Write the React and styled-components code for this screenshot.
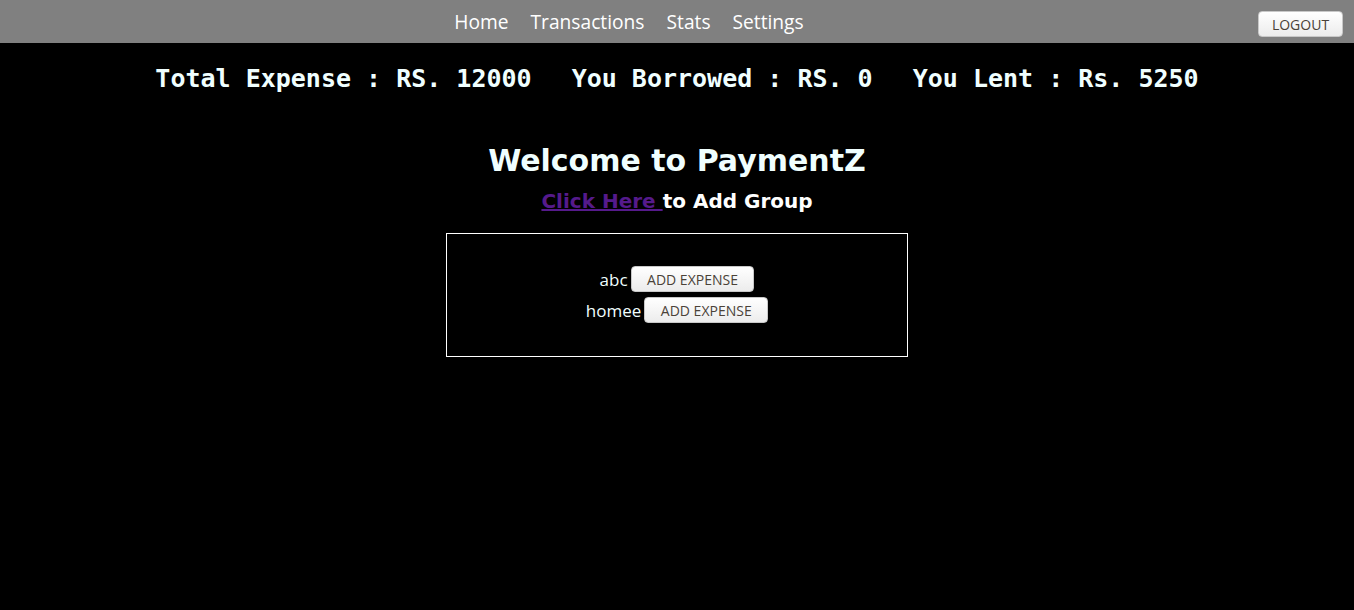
import React from 'react';
import styled, { createGlobalStyle } from 'styled-components';

const GlobalStyle = createGlobalStyle`
  html, body {
    margin: 0;
    padding: 0;
    background: #000;
  }
  body {
    font-family: 'Open Sans', 'DejaVu Sans', sans-serif;
  }
`;

const Page = styled.div`
  min-height: 610px;
  background: #000;
  color: azure;
`;

const Header = styled.header`
  height: 43px;
  background: #808080;
  display: flex;
  align-items: flex-start;
`;

const Nav = styled.nav`
  flex: 1;
  display: flex;
  justify-content: center;
  gap: 22px;
  padding-top: 8px;
`;

const NavLink = styled.a`
  color: #fff;
  font-size: 19.2px;
  text-decoration: none;
  line-height: 28px;
  cursor: pointer;
`;

const Button = styled.button`
  height: 26px;
  padding: 0 15.5px;
  border: 1px solid #c8c8c8;
  border-radius: 4px;
  background: linear-gradient(#ffffff, #ececec);
  color: #4a4238;
  font-family: 'Open Sans', 'DejaVu Sans', sans-serif;
  font-size: 14px;
  text-transform: uppercase;
  cursor: pointer;
`;

const LogoutButton = styled(Button)`
  width: 85px;
  padding: 0;
  margin: 11px 11px 0 0;
`;

const Stats = styled.div`
  display: flex;
  justify-content: center;
  gap: 40px;
  margin-top: 21px;
  font-family: 'DejaVu Sans Mono', monospace;
  font-weight: bold;
  font-size: 25px;
  line-height: 30px;
  white-space: pre;
`;

const Welcome = styled.h1`
  margin: 49px 0 0;
  text-align: center;
  font-family: 'DejaVu Sans', sans-serif;
  font-size: 30px;
  line-height: 36px;
`;

const AddGroup = styled.h3`
  margin: 9px 0 0;
  text-align: center;
  font-family: 'DejaVu Sans', sans-serif;
  font-size: 20px;
  line-height: 26px;
  color: #fff;

  a {
    color: #551a8b;
  }
`;

const GroupBox = styled.div`
  width: 460px;
  margin: 19px auto 0;
  border: 1px solid #fff;
  padding: 32px 0 33px;
  display: flex;
  flex-direction: column;
  align-items: center;
  gap: 5px;
`;

const GroupRow = styled.div`
  display: flex;
  align-items: center;
  gap: 3px;
  font-size: 17px;
  color: azure;
`;

const groups = ['abc', 'homee'];

const App = () => (
  <Page>
    <GlobalStyle />
    <Header>
      <Nav>
        <NavLink>Home</NavLink>
        <NavLink>Transactions</NavLink>
        <NavLink>Stats</NavLink>
        <NavLink>Settings</NavLink>
      </Nav>
      <LogoutButton>Logout</LogoutButton>
    </Header>
    <Stats>
      <span>Total Expense : RS. 12000</span>
      <span>You Borrowed : RS. 0</span>
      <span>You Lent : Rs. 5250</span>
    </Stats>
    <Welcome>Welcome to PaymentZ</Welcome>
    <AddGroup>
      <a href="#add">Click Here </a>to Add Group
    </AddGroup>
    <GroupBox>
      {groups.map((name) => (
        <GroupRow key={name}>
          {name}
          <Button>Add Expense</Button>
        </GroupRow>
      ))}
    </GroupBox>
  </Page>
);

export default App;
